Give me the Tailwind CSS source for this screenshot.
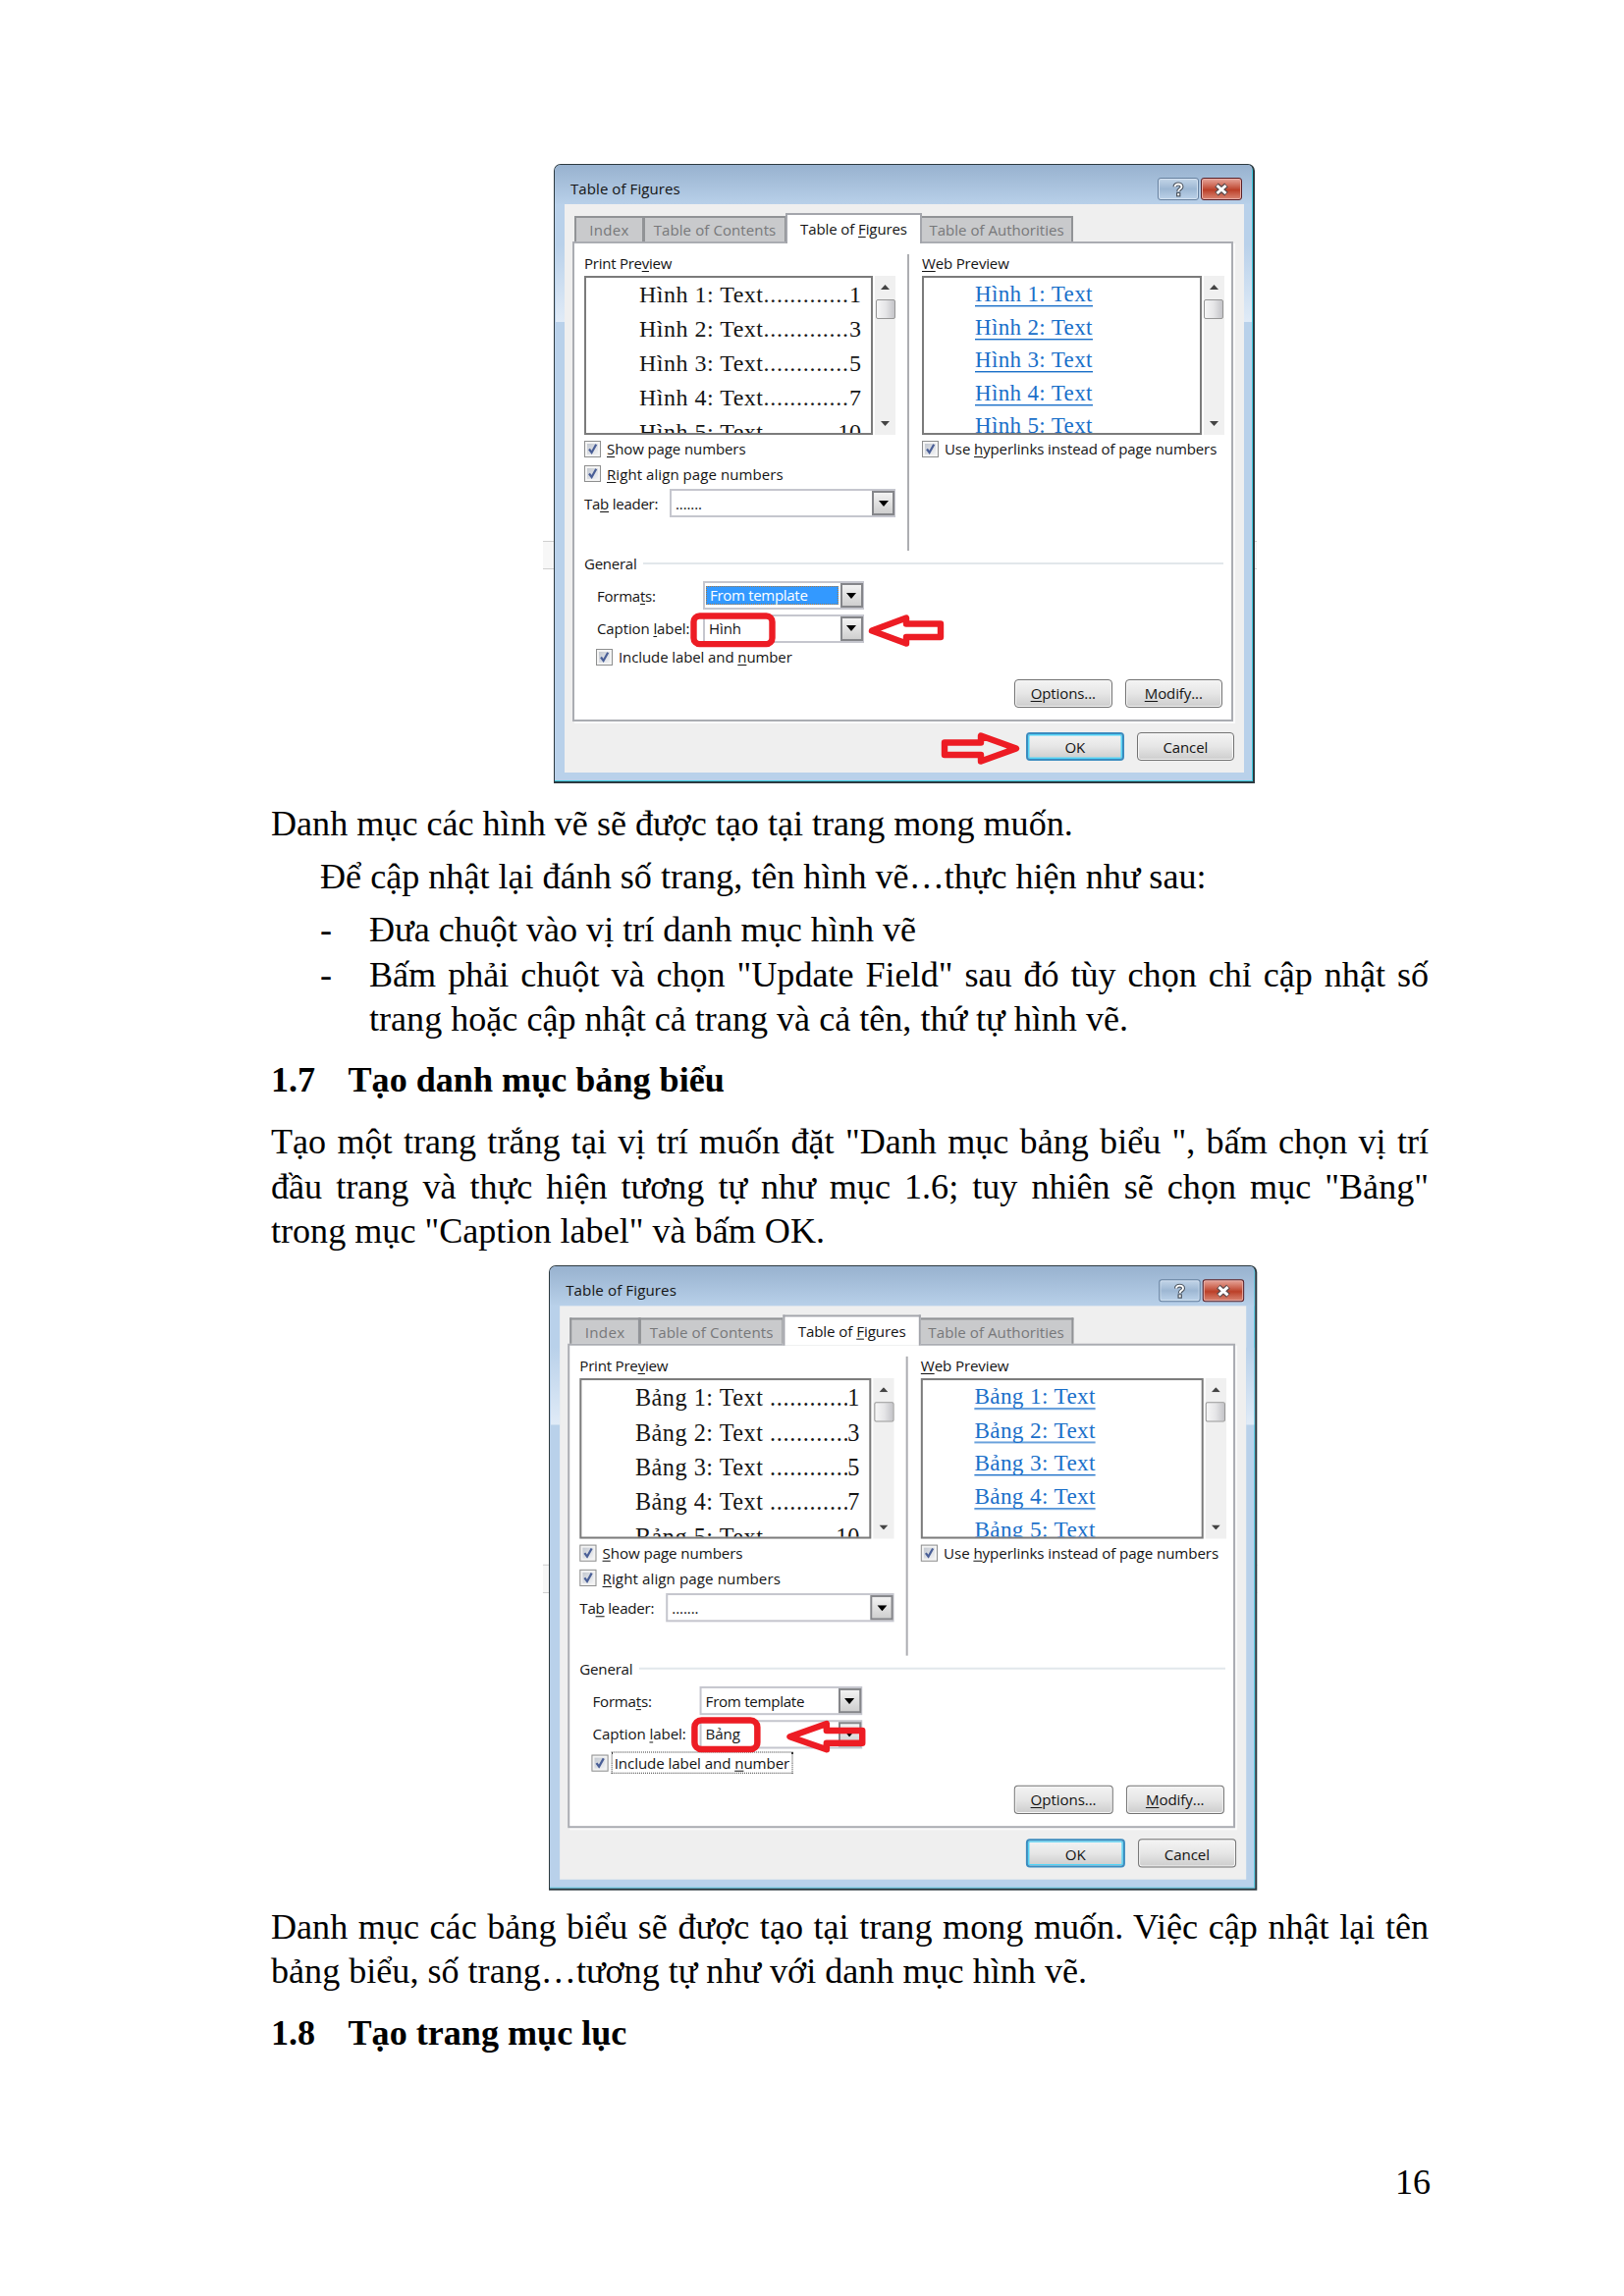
<!DOCTYPE html>
<html lang="vi">
<head>
<meta charset="utf-8">
<title>Table of Figures</title>
<script src="https://cdn.jsdelivr.net/npm/@tailwindcss/browser@4"></script>
</head>
<body class="bg-white">
<main class="w-[1654px] h-[2339px] pt-[167px] pl-[276px] pr-[199px] overflow-hidden text-black text-[36.11px] leading-[45.6px] font-['Liberation_Serif',serif]">
  <div id="figures" class="ml-[288px] w-[713px] h-[631px]"></div>

  <p class="mt-[19.2px]">Danh mục các hình vẽ sẽ được tạo tại trang mong muốn.</p>
  <p class="mt-[8.4px] pl-[50px]">Để cập nhật lại đánh số trang, tên hình vẽ…thực hiện như sau:</p>
  <ul class="mt-[8.4px] pl-[50px]">
    <li class="flex"><span class="w-[50px] shrink-0">-</span><span class="flex-1">Đưa chuột vào vị trí danh mục hình vẽ</span></li>
    <li class="flex"><span class="w-[50px] shrink-0">-</span><span class="flex-1 text-justify">Bấm phải chuột và chọn "Update Field" sau đó tùy chọn chỉ cập nhật số trang hoặc cập nhật cả trang và cả tên, thứ tự hình vẽ.</span></li>
  </ul>
  <h2 class="mt-[16px] flex font-bold"><span class="w-[78.5px]">1.7</span>Tạo danh mục bảng biểu</h2>
  <p class="mt-[17.4px] text-justify">Tạo một trang trắng tại vị trí muốn đặt "Danh mục bảng biểu ", bấm chọn vị trí đầu trang và thực hiện tương tự như mục 1.6; tuy nhiên sẽ chọn mục "Bảng" trong mục "Caption label" và bấm OK.</p>

  <div id="tables" class="mt-[11.7px] ml-[282.5px] w-[720px] h-[636px]"></div>

  <p class="mt-[15.5px] text-justify">Danh mục các bảng biểu sẽ được tạo tại trang mong muốn. Việc cập nhật lại tên bảng biểu, số trang…tương tự như với danh mục hình vẽ.</p>
  <h2 class="mt-[17px] flex font-bold"><span class="w-[78.5px]">1.8</span>Tạo trang mục lục</h2>
  <footer class="mt-[106.4px] -mr-[2px] text-right">16</footer>
</main>

<script>
const scrollbar = `
  <div class="ml-[2px] w-[21px] h-[162px] bg-[#f0f0f0] flex flex-col items-center">
    <svg class="mt-[9px]" width="9" height="5" viewBox="0 0 9 5"><path d="M0 5L4.5 0L9 5Z" fill="#444"/></svg>
    <div class="mt-[10px] w-[20px] h-[20px] rounded-[2px] border border-[#969696] bg-linear-to-r from-[#f6f6f6] via-[#e6e6e8] to-[#c4c4c8]"></div>
    <svg class="mt-auto mb-[9px]" width="9" height="5" viewBox="0 0 9 5"><path d="M0 0L4.5 5L9 0Z" fill="#444"/></svg>
  </div>`;

const check = `
  <span class="w-[17px] h-[17px] shrink-0 border border-[#8e8f8f] bg-[#f4f4f4] p-[2px]">
    <span class="block w-full h-full bg-linear-to-br from-[#c3c8d0] to-[#f2f3f5]">
      <svg class="block" width="11" height="11" viewBox="0 0 11 11"><path d="M2 5.5L4.6 9L9.2 .8" fill="none" stroke="#4a5f97" stroke-width="2.2"/></svg>
    </span>
  </span>`;

const select = (size, body) => `
  <div class="${size} h-[29.4px] flex border-2 border-[#c5c6ce] bg-white">
    <div class="flex-1 flex items-center">${body}</div>
    <div class="w-[23px] -mr-px border-2 border-[#85868a] bg-linear-to-b from-[#f3f3f3] to-[#cfcfcf] flex items-center justify-center">
      <svg width="10" height="6" viewBox="0 0 10 6"><path d="M0 0H10L5 6Z" fill="#000"/></svg>
    </div>
  </div>`;

const button = (label, tone) => `
  <div class="${tone} w-[99.5px] h-[29.4px] rounded-[4px] bg-linear-to-b from-[#f4f4f4] from-0% via-[#e6e6e6] via-50% to-[#cdcdcd] flex items-center justify-center">${label}</div>`;
const plain = 'border border-[#737373] shadow-[inset_0_0_0_1px_#f6f6f6]';
const primary = 'border-2 border-[#3c8cbf] shadow-[inset_0_0_0_1.5px_#52d4f7]';

const tab = (label, size) => `
  <div class="${size} h-[26px] border-2 border-b-0 border-[#919396] bg-[#c9cacc] text-[#77787a] pt-[2px] text-center whitespace-nowrap">${label}</div>`;

function dialog(o) {
  const pages = [1, 3, 5, 7, 10];
  const print = pages.map((p, i) => `
    <div class="flex h-[35px] whitespace-pre"><span class="tracking-[0.5px]">${o.word} ${i + 1}: Text${o.gap}</span><span class="flex-1 overflow-hidden h-[35px] tracking-[0.7px]">${o.dots}</span><span>${p}</span></div>`).join('');
  const web = pages.map((p, i) => `
    <div class="h-[33.5px]"><span class="border-b border-[#1a6fc9] inline-block h-[24px] leading-[24px] shadow-[0_1px_0_#1a6fc966]">${o.word} ${i + 1}: Text</span></div>`).join('');
  return `
  <div class="relative w-[713px] h-[631px] origin-top-left ${o.scale} text-[15px] leading-[20px] text-[#141414] tracking-[-0.1px] font-['Open_Sans','Noto_Sans',sans-serif]">
    <div class="absolute -left-[11px] ${o.ghost} border-y border-[#cfcfcf] bg-[#f7f7f7]"></div>
    <div class="relative w-[713.5px] h-[631px] rounded-t-[7px] border border-b-2 border-r-2 border-[#2d3a40] bg-[#b9d1ea] shadow-[inset_-1px_-1px_0_#3fcbe0] overflow-hidden">
      <div class="h-[40px] mr-px pt-[1px] bg-linear-to-b from-[#98b2cf] to-[#b8d0e9] flex">
        <div class="pl-[16px] pt-[13px] tracking-[0.08px] flex-1">Table of Figures</div>
        <div class="mt-[12px] w-[42px] h-[23px] rounded-[3px] border border-[#66809f] shadow-[inset_0_0_0_1px_#d5e3f2] bg-linear-to-b from-[#c3d5e8] from-0% via-[#9db7d3] via-50% to-[#bcd2e9] flex items-center justify-center">
          <svg width="14" height="16" viewBox="0 0 14 16"><path d="M3.5 5.2C3.5 1.6 10.5 1.6 10.5 5.2C10.5 7.4 7.2 7.4 7.2 10.2" fill="none" stroke="#4d5661" stroke-width="4"/><rect x="5" y="11" width="4.4" height="4.4" fill="#4d5661"/><path d="M3.5 5.2C3.5 1.6 10.5 1.6 10.5 5.2C10.5 7.4 7.2 7.4 7.2 10" fill="none" stroke="#fff" stroke-width="1.8"/><rect x="6.2" y="12" width="2" height="2.2" fill="#fff"/></svg>
        </div>
        <div class="mt-[12px] ml-[2.5px] mr-[9.5px] w-[42px] h-[23px] rounded-[3px] border border-[#5a1f26] shadow-[inset_0_0_0_1px_#e9aea6] bg-linear-to-b from-[#e6a59b] from-0% via-[#bb3f28] via-55% to-[#d98573] flex items-center justify-center">
          <svg width="16" height="14" viewBox="0 0 16 14"><path d="M3 2.5L13 11.5M13 2.5L3 11.5" stroke="#5b4a4c" stroke-width="5.4"/><path d="M3.5 3L12.5 11M12.5 3L3.5 11" stroke="#fff" stroke-width="3"/></svg>
        </div>
      </div>
      <div class="flex h-[579px] pl-px pr-px">
        <div class="w-[9px] mt-[42px] h-[78px] bg-linear-to-b from-[#b9d1ea] to-[#e0ebf7]"></div>
        <div class="w-[692px] h-[579px] bg-[#efefef]">
          <div class="flex items-end h-[38px] pl-[10px]">
            ${tab('Index', 'w-[71px] tracking-[0.3px]')}
            ${tab('Table of Contents', 'w-[146px] -ml-[1px] tracking-[0.1px]')}
            <div class="relative z-10 w-[139px] h-[31px] -mb-[2px] -ml-px border-2 border-b-0 border-[#a3a5ab] bg-white pt-[3.5px] text-center tracking-[-0.1px]">Table of <u class="underline-offset-2">F</u>igures</div>
            ${tab('Table of Authorities', 'w-[156px] -ml-[2px] tracking-[0.02px]')}
          </div>
          <div class="ml-[8px] w-[673px] h-[489px] border-2 border-[#aaacb2] bg-white pl-[10px] shadow-[2px_2px_0_#fafafa]">
            <div class="flex h-[314px]">
              <div class="w-[329px] pt-[10px]">
                <div class="tracking-[-0.25px]">Print Pre<u class="underline-offset-2">v</u>iew</div>
                <div class="flex mt-[3px]">
                  <div class="w-[294px] h-[162px] border-2 border-[#7b7b7b] pl-[54px] pr-[10px] ${o.lift} overflow-hidden text-[24px] leading-[35px] font-['Liberation_Serif',serif]">${print}</div>
                  ${scrollbar}
                </div>
                <div class="mt-[4px] flex items-center gap-[6px]">${check}<span><u class="underline-offset-2">S</u>how page numbers</span></div>
                <div class="mt-[5.5px] flex items-center gap-[6px]">${check}<span class="tracking-[0.07px]"><u class="underline-offset-2">R</u>ight align page numbers</span></div>
                <div class="mt-[5.5px] flex items-center"><span class="w-[87px] tracking-[-0.25px]">Ta<u class="underline-offset-2">b</u> leader:</span>${select('w-[230px]', '<span class="pl-[4px]">.......</span>')}</div>
              </div>
              <div class="mt-[11px] w-[2px] h-[302px] bg-[#adaeb2]"></div>
              <div class="pl-[13px] pt-[10px]">
                <div>
                  <span class="tracking-[-0.15px]"><u class="underline-offset-2">W</u>eb Preview</span>
                </div>
                <div class="flex mt-[3px]">
                  <div class="w-[284.5px] h-[162px] border-2 border-[#7b7b7b] pl-[52px] pt-[5px] overflow-hidden text-[23px] tracking-[0.35px] text-[#1a6fc9] font-['Liberation_Serif',serif]">${web}</div>
                  ${scrollbar}
                </div>
                <div class="mt-[4px] flex items-center gap-[6px]">${check}<span>Use <u class="underline-offset-2">h</u>yperlinks instead of page numbers</span></div>
              </div>
            </div>
            <div class="mt-[2px] flex items-center gap-[7px] pr-[8px]"><span class="tracking-[-0.25px]">General</span><span class="flex-1 h-[2px] bg-[#e2e7eb]"></span></div>
            <div class="mt-[8px] pl-[13px] flex items-center"><span class="w-[108px] tracking-[-0.25px]">Forma<u class="underline-offset-2">t</u>s:</span>${select('w-[163.5px]', o.format)}</div>
            <div class="mt-[4.3px] pl-[13px] flex items-center"><span class="w-[108px] whitespace-nowrap">Caption <u class="underline-offset-2">l</u>abel:</span>${select('w-[163.5px]', `<span class="pl-[4px]">${o.word}</span>`)}</div>
            <div class="mt-[4px] pl-[12px] flex items-center gap-[3px]">${check}<span class="${o.focus} px-[2px] -mt-px">Include label and <u class="underline-offset-2">n</u>umber</span></div>
            <div class="mt-[12px] pr-[9px] flex justify-end gap-[13px]">
              ${button('<span class="pb-[2px]"><u class="underline-offset-2">O</u>ptions...</span>', plain)}
              ${button('<span class="pb-[2px]"><u class="underline-offset-2">M</u>odify...</span>', plain)}
            </div>
          </div>
          <div class="mt-[11px] pr-[9.5px] flex justify-end gap-[13px]">
            ${button('OK', primary)}
            ${button('Cancel', plain)}
          </div>
        </div>
        <div class="w-[8px] mt-[42px] h-[78px] bg-linear-to-b from-[#b9d1ea] to-[#e0ebf7]"></div>
      </div>
    </div>
    <svg class="absolute left-0 top-0" width="713" height="631" viewBox="0 0 713 631" fill="none" stroke="#ed1c24" stroke-width="6.4" stroke-linejoin="round">${o.marks}</svg>
  </div>`;
}

document.getElementById('figures').innerHTML = dialog({
  word: 'Hình', gap: '', dots: '.............', lift: 'pt-0',
  scale: 'scale-100', ghost: 'w-[727px] h-[29px] top-[384px]', focus: 'border border-transparent',
  format: '<span class="ml-px mr-[2px] pl-[3px] flex-1 h-[19px] leading-[17px] tracking-[-0.3px] bg-[#3399ff] border border-dotted border-[#a87840] text-white">From template</span>',
  marks: '<rect x="142.5" y="460.5" width="80" height="28.6" rx="6"/><path d="M324 475.5L359 462.5V468.5H394V482H359V488.5Z"/><path d="M471 595.5L435 582.5V589.5H398V602H435V608.5Z"/>'
});
document.getElementById('tables').innerHTML = dialog({
  word: 'Bảng', gap: ' ', dots: '............', lift: 'pt-[1px]',
  scale: 'scale-x-[1.0102] scale-y-[1.0092]', ghost: 'ml-[5px] w-[720px] h-[29px] top-[302px]', focus: 'border border-dotted border-[#333]',
  format: '<span class="pl-[4px] tracking-[-0.3px]">From template</span>',
  marks: '<rect x="146.9" y="459.2" width="63.3" height="29.4" rx="7"/><path d="M243 475.8L280 462.8V469.6H316V482.4H280V488.8Z"/>'
});
</script>
</body>
</html>
